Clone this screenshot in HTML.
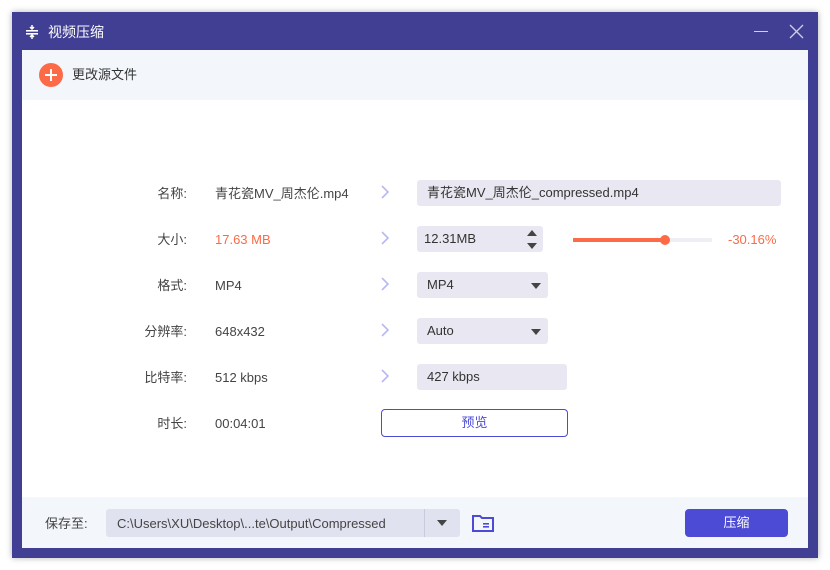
<!DOCTYPE html>
<html><head><meta charset="utf-8"><style>
*{margin:0;padding:0;box-sizing:border-box}
body{width:830px;height:570px;background:#fff;position:relative;overflow:hidden;font-family:"Liberation Sans","Noto Sans CJK SC",sans-serif;font-size:13px;line-height:18px;color:#333}
.a{position:absolute}
.lbl{position:absolute;width:80px;text-align:right;left:107px;color:#444;line-height:18px}
.val{position:absolute;left:215px;color:#444;line-height:18px}
.chev{position:absolute;left:380px;width:10px;height:16px}
.box{position:absolute;background:#e9e8f2;border-radius:3px;color:#333;padding-left:10px;line-height:26px;height:26px}
.tri{position:absolute;width:0;height:0;border-left:5px solid transparent;border-right:5px solid transparent;border-top:6px solid #444}
</style></head><body>
<div class="a" style="left:12px;top:12px;width:806px;height:546px;background:#413f93;box-shadow:0 0 6px rgba(0,0,0,.3)"></div>
<svg class="a" style="left:24px;top:24px" width="16" height="16" viewBox="0 0 16 16"><rect x="2" y="6" width="12" height="1.6" fill="#fff"/><rect x="2" y="9" width="12" height="1.6" fill="#fff"/><path d="M8 1v4M6 3l2 2 2-2M8 15v-3M6 13l2-2 2 2" stroke="#fff" stroke-width="1.5" fill="none"/></svg>
<div class="a" style="left:48px;top:22px;color:#fff;font-size:14px;line-height:20px">视频压缩</div>
<div class="a" style="left:754px;top:31px;width:14px;height:1px;background:#cfcfe8"></div>
<svg class="a" style="left:789px;top:24px" width="15" height="15"><path d="M1 1L14 14M14 1L1 14" stroke="#cfcfe8" stroke-width="1.3"/></svg>
<div class="a" style="left:22px;top:50px;width:786px;height:498px;background:#fff"></div>
<div class="a" style="left:22px;top:50px;width:786px;height:50px;background:#f3f6fb"></div>
<div class="a" style="left:39px;top:63px;width:24px;height:24px;border-radius:50%;background:#fd6a47"></div>
<div class="a" style="left:45px;top:74px;width:12px;height:2px;background:#fff"></div>
<div class="a" style="left:50px;top:69px;width:2px;height:12px;background:#fff"></div>
<div class="a" style="left:72px;top:66px;font-size:13px;line-height:18px;color:#333">更改源文件</div>

<div class="lbl" style="top:185px">名称:</div><div class="val" style="top:185px">青花瓷MV_周杰伦.mp4</div>
<div class="lbl" style="top:231px">大小:</div><div class="val" style="top:231px;color:#fd6a47">17.63 MB</div>
<div class="lbl" style="top:277px">格式:</div><div class="val" style="top:277px">MP4</div>
<div class="lbl" style="top:323px">分辨率:</div><div class="val" style="top:323px">648x432</div>
<div class="lbl" style="top:369px">比特率:</div><div class="val" style="top:369px">512 kbps</div>
<div class="lbl" style="top:415px">时长:</div><div class="val" style="top:415px">00:04:01</div>

<svg class="chev" style="top:184px" viewBox="0 0 10 16"><path d="M2 2l6 6-6 6" stroke="#b9b8f5" stroke-width="1.6" fill="none"/></svg>
<svg class="chev" style="top:230px" viewBox="0 0 10 16"><path d="M2 2l6 6-6 6" stroke="#b9b8f5" stroke-width="1.6" fill="none"/></svg>
<svg class="chev" style="top:276px" viewBox="0 0 10 16"><path d="M2 2l6 6-6 6" stroke="#b9b8f5" stroke-width="1.6" fill="none"/></svg>
<svg class="chev" style="top:322px" viewBox="0 0 10 16"><path d="M2 2l6 6-6 6" stroke="#b9b8f5" stroke-width="1.6" fill="none"/></svg>
<svg class="chev" style="top:368px" viewBox="0 0 10 16"><path d="M2 2l6 6-6 6" stroke="#b9b8f5" stroke-width="1.6" fill="none"/></svg>

<div class="box" style="left:417px;top:180px;width:364px">青花瓷MV_周杰伦_compressed.mp4</div>
<div class="box" style="left:417px;top:226px;width:126px;padding-left:7px">12.31MB</div>
<div class="tri" style="left:527px;top:243px"></div>
<div class="a" style="left:527px;top:230px;width:0;height:0;border-left:5px solid transparent;border-right:5px solid transparent;border-bottom:6px solid #444"></div>
<div class="a" style="left:573px;top:238px;width:139px;height:4px;background:#eeeef4"></div>
<div class="a" style="left:573px;top:238px;width:92px;height:4px;background:#fd6a47"></div>
<div class="a" style="left:660px;top:235px;width:10px;height:10px;border-radius:50%;background:#fd6a47"></div>
<div class="a" style="left:728px;top:231px;color:#fd6a47">-30.16%</div>
<div class="box" style="left:417px;top:272px;width:131px">MP4</div><div class="tri" style="left:531px;top:283px"></div>
<div class="box" style="left:417px;top:318px;width:131px">Auto</div><div class="tri" style="left:531px;top:329px"></div>
<div class="box" style="left:417px;top:364px;width:150px">427 kbps</div>
<div class="a" style="left:381px;top:409px;width:187px;height:28px;border:1px solid #4b4bd6;border-radius:4px;color:#4b4bd6;text-align:center;line-height:26px">预览</div>

<div class="a" style="left:22px;top:497px;width:786px;height:51px;background:#f3f6fb"></div>
<div class="a" style="left:45px;top:515px;color:#444">保存至:</div>
<div class="a" style="left:106px;top:509px;width:354px;height:28px;background:#e1e2ef;border-radius:3px"></div>
<div class="a" style="left:117px;top:515px;color:#444">C:\Users\XU\Desktop\...te\Output\Compressed</div>
<div class="a" style="left:424px;top:509px;width:1px;height:28px;background:#c9cade"></div>
<div class="tri" style="left:437px;top:520px"></div>
<svg class="a" style="left:471px;top:513px" width="24" height="20" viewBox="0 0 24 20"><path d="M2 3h7l2 2h11v13H2z" fill="none" stroke="#4b4bd6" stroke-width="2"/><rect x="12" y="10" width="6" height="1.6" fill="#4b4bd6"/><rect x="12" y="13" width="6" height="1.6" fill="#4b4bd6"/></svg>
<div class="a" style="left:685px;top:509px;width:103px;height:28px;background:#4b4bd6;border-radius:4px;color:#fff;text-align:center;line-height:28px">压缩</div>
</body></html>
